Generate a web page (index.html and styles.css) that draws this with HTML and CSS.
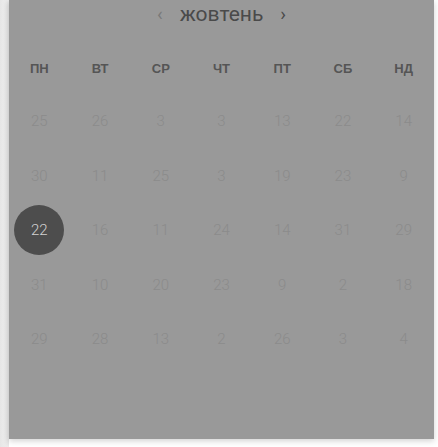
FILE: index.html
```html
<!DOCTYPE html>
<html lang="uk">
<head>
  <meta charset="UTF-8">
  <meta name="viewport" content="width=device-width, initial-scale=1.0">
  <title>Календар</title>
  <link rel="stylesheet" href="styles.css">
</head>
<body>
  <div class="sheet">
    <div class="calendar">
      <div class="month-bar">
        <span class="nav prev">‹</span>
        <span class="month">жовтень</span>
        <span class="nav next">›</span>
      </div>

      <div class="weekdays">
        <div>ПН</div><div>ВТ</div><div>СР</div><div>ЧТ</div><div>ПТ</div><div>СБ</div><div>НД</div>
      </div>

      <div class="days">
        <div class="day">25</div><div class="day">26</div><div class="day">3</div><div class="day">3</div><div class="day">13</div><div class="day">22</div><div class="day">14</div>
        <div class="day">30</div><div class="day">11</div><div class="day">25</div><div class="day">3</div><div class="day">19</div><div class="day">23</div><div class="day">9</div>
        <div class="day"><span class="selected">22</span></div><div class="day">16</div><div class="day">11</div><div class="day">24</div><div class="day">14</div><div class="day">31</div><div class="day">29</div>
        <div class="day">31</div><div class="day">10</div><div class="day">20</div><div class="day">23</div><div class="day">9</div><div class="day">2</div><div class="day">18</div>
        <div class="day">29</div><div class="day">28</div><div class="day">13</div><div class="day">2</div><div class="day">26</div><div class="day">3</div><div class="day">4</div>
      </div>
    </div>
  </div>
</body>
</html>
```

FILE: styles.css
```css
html, body { margin: 0; height: 100%; }
body { background: linear-gradient(to right, #e6e6e6, #f3f3f3 9px); font-family: Roboto, "Liberation Sans", sans-serif; overflow: hidden; }
.sheet { margin-left: 9px; height: 100%; background: #fff; box-shadow: -2px 0 5px rgba(0,0,0,0.08); }
.calendar { width: 425px; height: 439px; background: #999; box-shadow: 0 2px 6px rgba(0,0,0,0.18); }
.month-bar { height: 28px; display: flex; justify-content: center; align-items: center; gap: 17px; }
.month { font-size: 21px; color: #4a4a4a; line-height: 28px; }
.nav { font-size: 19px; line-height: 28px; }
.nav.prev { color: #7a7a7a; }
.nav.next { color: #4a4a4a; }
.weekdays { display: grid; grid-template-columns: repeat(7, 1fr); margin-top: 26px; height: 28px; align-items: center; }
.weekdays div { text-align: center; font-family: "Liberation Sans", Arial, sans-serif; font-size: 13px; font-weight: bold; color: #555; }
.days { display: grid; grid-template-columns: repeat(7, 1fr); grid-auto-rows: 54.5px; margin-top: 12px; }
.day { display: flex; justify-content: center; align-items: center; font-size: 15px; font-weight: 300; color: #8b8b8b; }
.selected { width: 50px; height: 50px; border-radius: 50%; background: #4d4d4d; color: #d2d2d2; display: flex; justify-content: center; align-items: center; }
```
